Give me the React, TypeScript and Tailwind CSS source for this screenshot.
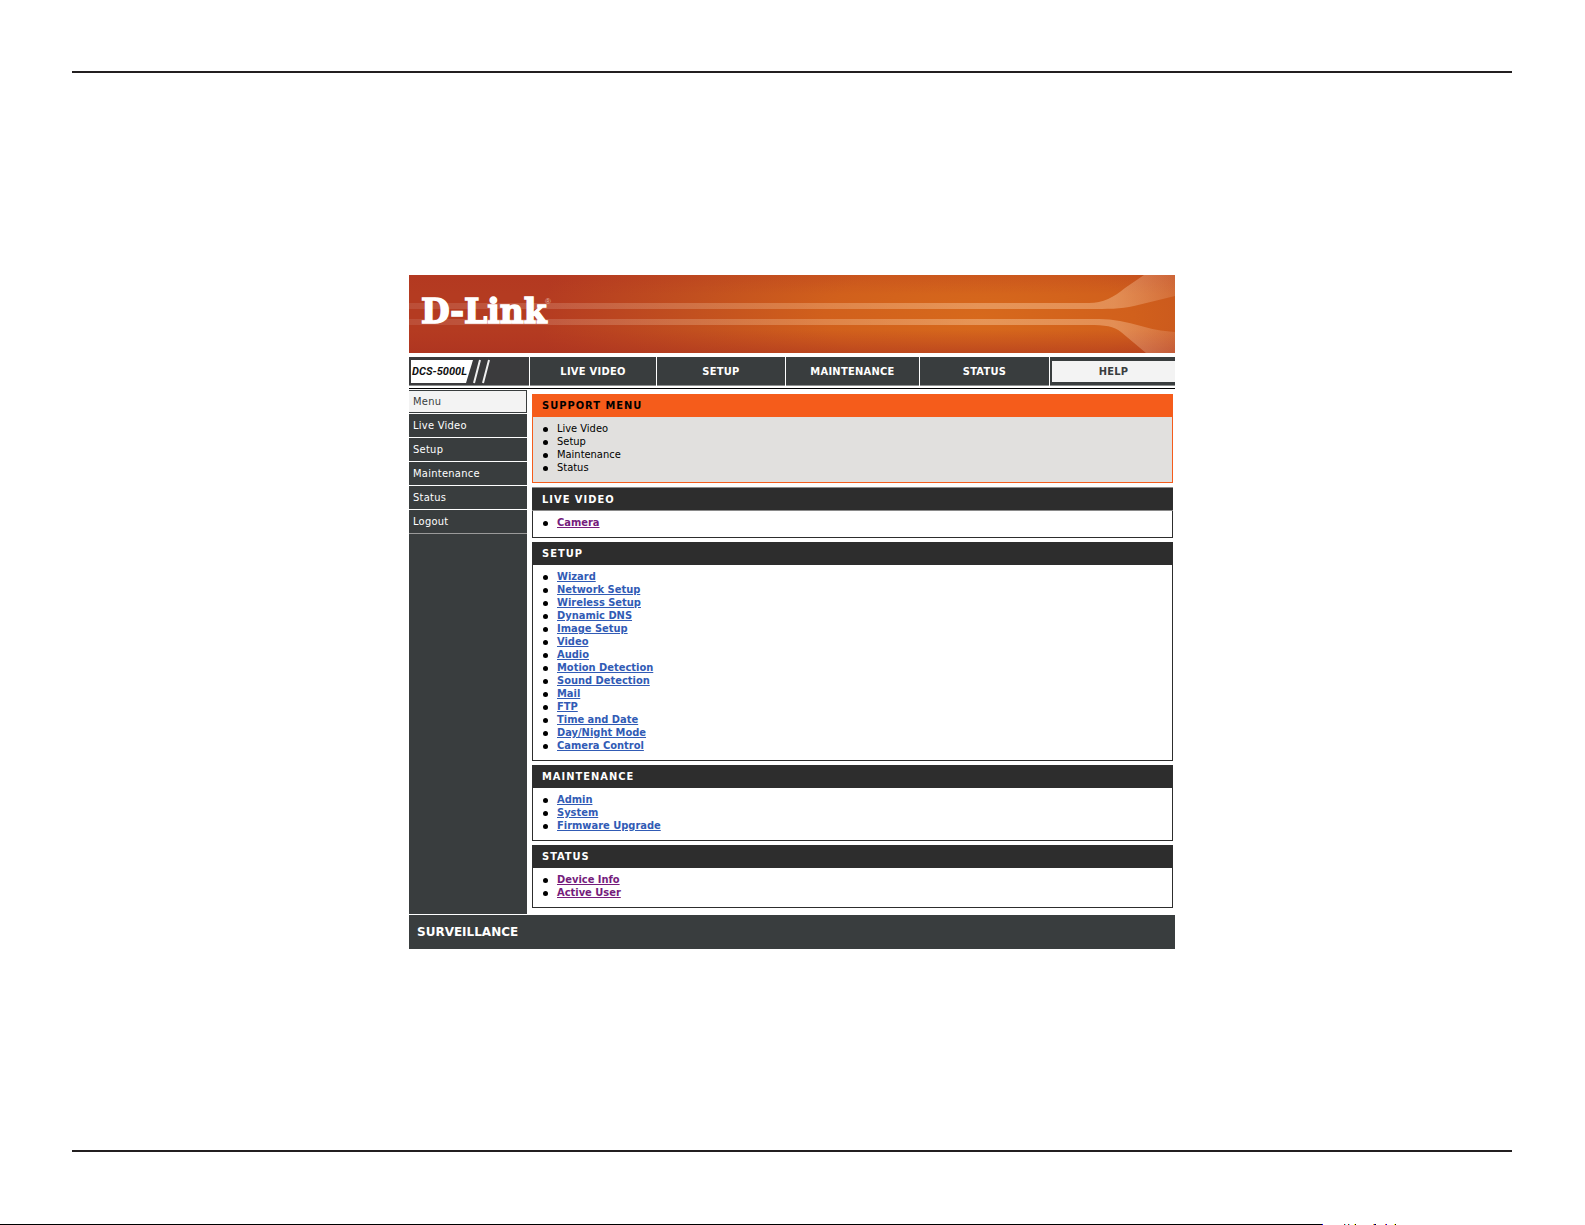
const NAV = ['LIVE VIDEO', 'SETUP', 'MAINTENANCE', 'STATUS', 'HELP']
const MENU = ['Menu', 'Live Video', 'Setup', 'Maintenance', 'Status', 'Logout']
const SUPPORT = ['Live Video', 'Setup', 'Maintenance', 'Status']

interface Section {
  title: string
  links: string[]
  visited?: boolean
  framed?: boolean
}

const SECTIONS: Section[] = [
  { title: 'LIVE VIDEO', links: ['Camera'], visited: true, framed: true },
  {
    title: 'SETUP',
    links: [
      'Wizard',
      'Network Setup',
      'Wireless Setup',
      'Dynamic DNS',
      'Image Setup',
      'Video',
      'Audio',
      'Motion Detection',
      'Sound Detection',
      'Mail',
      'FTP',
      'Time and Date',
      'Day/Night Mode',
      'Camera Control',
    ],
  },
  { title: 'MAINTENANCE', links: ['Admin', 'System', 'Firmware Upgrade'] },
  { title: 'STATUS', links: ['Device Info', 'Active User'], visited: true },
]

// stray scan pixels along the bottom edge: [x, colour]
const SPECKS: [number, string][] = [
  [1322, '#0000ff'],
  [1344, '#a01010'],
  [1345, '#40ffff'],
  [1348, '#a01010'],
  [1349, '#40ffff'],
  [1354, '#ffff00'],
  [1355, '#000000'],
  [1373, '#ffb000'],
  [1374, '#0000c0'],
  [1375, '#000000'],
  [1385, '#ff6000'],
  [1386, '#0000ff'],
  [1394, '#ffff00'],
  [1395, '#000000'],
]

function Banner() {
  return (
    <svg viewBox="0 0 766 78" className="block w-full" role="img" aria-label="D-Link">
      <defs>
        <radialGradient id="glow" gradientUnits="userSpaceOnUse" cx="0" cy="0" r="1" gradientTransform="translate(570 42) scale(440 150)">
          <stop offset="0" stopColor="#d7691c" />
          <stop offset="0.35" stopColor="#d1601c" />
          <stop offset="0.65" stopColor="#c2501f" />
          <stop offset="1" stopColor="#b43b21" />
        </radialGradient>
        <linearGradient id="shade" x1="0" y1="0" x2="0" y2="1">
          <stop offset="0" stopColor="#b03020" stopOpacity="0.2" />
          <stop offset="0.25" stopColor="#b03020" stopOpacity="0" />
          <stop offset="0.7" stopColor="#b03020" stopOpacity="0" />
          <stop offset="1" stopColor="#a83020" stopOpacity="0.5" />
        </linearGradient>
        <linearGradient id="stripe" gradientUnits="userSpaceOnUse" x1="0" y1="0" x2="766" y2="0">
          <stop offset="0" stopColor="#fff" stopOpacity="0.1" />
          <stop offset="0.5" stopColor="#ffd8b0" stopOpacity="0.28" />
          <stop offset="0.75" stopColor="#ffd8b0" stopOpacity="0.4" />
          <stop offset="0.92" stopColor="#ffd8b0" stopOpacity="0.38" />
          <stop offset="1" stopColor="#ffd8c0" stopOpacity="0.16" />
        </linearGradient>
      </defs>
      <rect width="766" height="78" fill="url(#glow)" />
      <rect width="766" height="78" fill="url(#shade)" />
      <path d="M0 28H680C694 28 705 22 716 13L735 0H766V21L725 31C712 34 698 34 680 34H0Z" fill="url(#stripe)" />
      <path d="M0 44H690C704 44 718 47 732 51C742 54 752 56 766 57V78H737L712 57C705 51 696 50 680 50H0Z" fill="url(#stripe)" />
      <text
        x="12"
        y="48"
        fontSize="33"
        fontWeight="bold"
        fill="#fff"
        stroke="#fff"
        strokeWidth="1.5"
        style={{ fontFamily: '"DejaVu Serif", serif' }}
      >
        D-Link
      </text>
      <text x="136" y="29" fontSize="8" fill="#e5b9a8" style={{ fontFamily: '"Liberation Sans", sans-serif' }}>
        ®
      </text>
    </svg>
  )
}

function ModelBadge() {
  return (
    <svg viewBox="0 0 120 28" className="block h-7 w-[120px]" role="img" aria-label="DCS-5000L">
      <path d="M2 3H64L57 26H2Z" fill="#fff" />
      <path d="M71 3L65 26M80 3L74 26" stroke="#f0f0f0" strokeWidth="2" fill="none" />
      <text
        x="3"
        y="18"
        fontSize="11"
        fontWeight="bold"
        fontStyle="italic"
        fill="#111"
        style={{ fontFamily: 'Roboto, "Liberation Sans", sans-serif' }}
      >
        DCS-5000L
      </text>
    </svg>
  )
}

function SectionBox({ title, links, visited, framed }: Section) {
  return (
    <section className="border border-t-0 border-[#2d2d2d]">
      <h2
        className={`-mx-px bg-[#2d2d2d] px-[10px] text-[11px] leading-6 font-bold tracking-[1px] text-white ${
          framed ? 'h-6 border-y border-[#8a8a8a]' : 'h-[23px]'
        }`}
      >
        {title}
      </h2>
      <ul className="pt-[5px] pb-2 pl-6">
        {links.map((link) => (
          <Item key={link}>
            <a href="#" className={`font-bold underline ${visited ? 'text-[#751c7c]' : 'text-[#315bb5]'}`}>
              {link}
            </a>
          </Item>
        ))}
      </ul>
    </section>
  )
}

function Item({ children }: { children: React.ReactNode }) {
  return (
    <li className="relative h-[13px] text-[11px] leading-[13px]">
      <span className="absolute top-[5px] -left-[14px] size-[5px] rounded-full bg-black" />
      {children}
    </li>
  )
}

export default function App() {
  return (
    <div className="flex min-h-screen flex-col bg-white font-['DejaVu_Sans_Condensed','DejaVu_Sans',sans-serif]">
      <div className="flex flex-1 flex-col pt-[71px] pr-[73px] pb-[72px] pl-[72px]">
        <hr className="border-t-2 border-[#231f20]" />

        <main className="mx-auto mt-[202px] w-full max-w-[766px]">
          <Banner />

          <nav className="mt-1 grid grid-cols-[120px_126fr_128fr_133fr_129fr_125fr] gap-px">
            <div className="border-b border-[#8d8f8f] bg-[#3b3b3d]">
              <ModelBadge />
            </div>
            {NAV.map((label) =>
              label === 'HELP' ? (
                <a key={label} href="#" className="border-b border-[#8d8f8f] bg-[#393d3e] pt-1 pb-[3px] pl-[2px]">
                  <span className="block h-[21px] bg-[#f3f3f3] text-center text-[11px] leading-[21px] font-bold tracking-wide text-[#393d3e]">
                    {label}
                  </span>
                </a>
              ) : (
                <a
                  key={label}
                  href="#"
                  className="h-[29px] border-b border-[#8d8f8f] bg-[#393d3e] text-center text-[11px] leading-[29px] font-bold tracking-wide text-white"
                >
                  {label}
                </a>
              )
            )}
          </nav>

          <div className="mt-[2px] h-px bg-black" />

          <div className="mt-px flex">
            <aside className="w-[118px] shrink-0 bg-[#393d3e]">
              {MENU.map((label, i) => (
                <a
                  key={label}
                  href="#"
                  className={`block h-6 border-b pl-1 text-[11px] leading-6 tracking-wide ${
                    i === 0
                      ? 'border-white bg-[#f3f3f3] text-[#393d3e] shadow-[inset_-1px_0_#393d3e,inset_0_1px_#393d3e,inset_0_-1px_#393d3e]'
                      : i === MENU.length - 1
                        ? 'border-[#9a9a9a] text-white'
                        : 'border-white text-white'
                  }`}
                >
                  {label}
                </a>
              ))}
            </aside>

            <div className="flex flex-1 flex-col gap-1 pt-1 pr-[2px] pb-[6px] pl-[5px]">
              <section className="border border-t-0 border-[#f55c1b] bg-[#e1e0de]">
                <h2 className="-mx-px h-[23px] bg-[#f55c1b] px-[10px] text-[11px] leading-6 font-bold tracking-[1px] text-black">
                  SUPPORT MENU
                </h2>
                <ul className="pt-[5px] pb-2 pl-6">
                  {SUPPORT.map((label) => (
                    <Item key={label}>{label}</Item>
                  ))}
                </ul>
              </section>
              {SECTIONS.map((section) => (
                <SectionBox key={section.title} {...section} />
              ))}
            </div>
          </div>

          <footer className="mt-px h-[34px] bg-[#393d3e] pl-2 font-['DejaVu_Sans',sans-serif] text-xs leading-[35px] font-bold text-white">
            SURVEILLANCE
          </footer>
        </main>

        <hr className="mt-auto border-t-2 border-[#231f20]" />
      </div>

      <svg viewBox="0 0 1585 1" className="block h-px w-full" aria-hidden="true">
        <rect width="1322" height="1" fill="#000" />
        {SPECKS.map(([x, fill]) => (
          <rect key={x} x={x} width="1" height="1" fill={fill} />
        ))}
      </svg>
    </div>
  )
}
